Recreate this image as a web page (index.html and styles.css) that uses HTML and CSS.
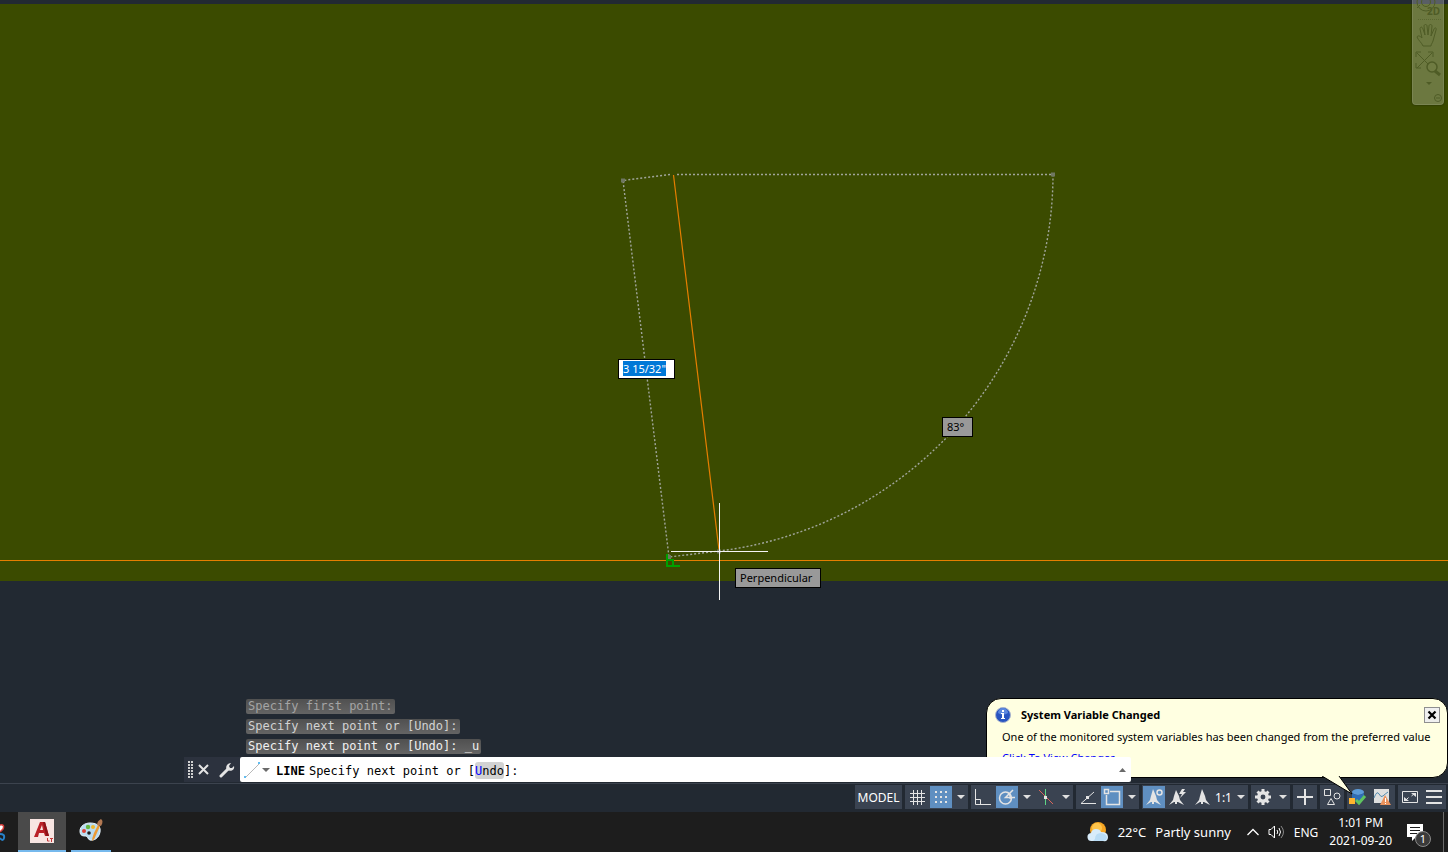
FILE: index.html
```html
<!DOCTYPE html>
<html lang="en">

<head>
	<title>Drawing</title>

	<meta charset="utf-8">
	<meta name="viewport" content="width=device-width, initial-scale=1.0">

	<link rel="stylesheet" href="styles.css">
</head>

<body>

	<main class="workspace">

		<div class="hatch"></div>

		<!-- Drawing area -->
		<svg class="drawing" aria-hidden="true">
			<path class="orange" d="M0 560.5H3000M673.5 175L719 550" />
			<path class="tracking" d="M670 174.500L623 180.500L669 557L719 551M677 174.500H1053A380 380 0 0 1 719 551" />
			<path class="grip" d="M621 178.500h4v4h-4zM1051 172.500h4v4h-4zM667 555h4v4h-4zM717 549.500h4v4h-4z" />
			<path class="snap" d="M667 554V566H680M667 560h6v6" />
			<path class="crosshair" d="M671 551.500H768M719.500 503V600" />
		</svg>

		<input class="distance" aria-label="Distance" value='3 15/32"'>
		<output class="tip tip-angle">83°</output>
		<div class="tip tip-snap">Perpendicular</div>

		<!-- Navigation bar -->
		<nav class="navbar" aria-label="Navigation">
			<svg width="30" height="104" viewBox="0 0 30 104">
				<g fill="none" stroke="#4f5c26">
					<circle cx="13" cy="2" r="9" />
					<circle cx="13" cy="2" r="4.500" />
					<path d="M7 5l-3 3" />
					<path stroke-dasharray="1 1" d="M5 19.500h23" opacity=".6" />
					<path d="M10 46c-1-3-5-6-6-9 1-2 3-1 5 1L7 29c0-2 2-3 3 0l2 6-1-9c0-2 3-2 3 0l1 9 1-9c0-2 3-2 3 0l-1 10 3-7c1-2 3-1 2 1l-3 11c-1 3-2 3-2 5z" />
					<path d="M4 53l15 15M19 53L4 68M3 57v-5h5M15 52h5v5M3 63v5h5" />
					<circle cx="19" cy="67" r="5" stroke-width="1.500" fill="#6f7b42" />
					<path stroke-width="3" d="M22 71l5 4" />
					<circle cx="25" cy="98" r="3.500" />
					<path d="M23 98h4" />
				</g>
				<path fill="#4f5c26" d="M13 82h6l-3 3z" />
				<text class="navbar-text" x="14" y="15">2D</text>
			</svg>
		</nav>

		<!-- Command line -->
		<section class="console">
			<ul class="history">
				<li class="old">Specify first point:</li>
				<li class="mid">Specify next point or [Undo]:</li>
				<li>Specify next point or [Undo]: _u</li>
			</ul>
			<div class="command">
				<div class="command-tools">
					<span class="handle"></span>
					<button class="plain" aria-label="Close"><svg width="11" height="11" viewBox="0 0 11 11"><path d="M1 1l9 9M10 1l-9 9" stroke="#e4e4e4" stroke-width="2" /></svg></button>
					<button class="plain wrench" aria-label="Customize"><svg width="16" height="16" viewBox="0 0 16 16"><path d="M2 14L9 7" stroke="#e4e4e4" stroke-width="3" stroke-linecap="round" /><path d="M8 8C6 5 8 1 12 1l-2 3 1 2 2 0 2-2c1 4-3 6-7 4z" fill="#e4e4e4" /></svg></button>
				</div>
				<div class="prompt">
					<button class="plain recent" aria-label="Recent commands"><svg width="27" height="17" viewBox="0 0 27 17"><path d="M2 15L15 2" stroke="#b8b8b8" /><path fill="#63bdf0" d="M0 14h2v2H0zM14 0h2v2h-2z" /><path fill="#6a6a6a" d="M18 6h8l-4 4z" /></svg></button>
					<b>LINE</b>
					<label for="cmd">Specify next point or [</label><button class="keyword"><i>U</i>ndo</button><span>]:</span>
					<input class="cmd" id="cmd">
					<button class="plain" aria-label="History"><svg width="8" height="5" viewBox="0 0 8 5"><path fill="#6a6a6a" d="M0 4h7L3.500 0z" /></svg></button>
				</div>
			</div>
		</section>

		<!-- Notification balloon -->
		<aside class="balloon">
			<header class="balloon-head">
				<svg width="16" height="16" viewBox="0 0 16 16"><circle cx="8" cy="8" r="7.500" fill="#2854c0" stroke="#a9b4cd" /><path d="M3 6a5 5 0 0 1 10 0q-5 3-10 0z" fill="#5d88de" /><path d="M7 3h2v2H7zM6 6h3v5h1v1H6v-1h1V7H6z" fill="#fff" /></svg>
				<h1>System Variable Changed</h1>
				<button class="balloon-close" aria-label="Close"><svg width="10" height="10" viewBox="0 0 10 10"><path d="M1.500 1.500l7 7M8.500 1.500l-7 7" stroke="#000" stroke-width="2.200" /></svg></button>
			</header>
			<p>One of the monitored system variables has been changed from the preferred value</p>
			<a href="#">Click To View Changes</a>
			<svg class="tail" width="34" height="20" viewBox="0 0 34 20"><path d="M1 0L31 18L18 0" fill="#ffffe1" stroke="#000" /></svg>
		</aside>

	</main>

	<!-- Status bar -->
	<div class="status">
		<div class="group"><button class="model">MODEL</button></div>
		<div class="group">
			<button aria-label="Grid"><svg width="22" height="22" viewBox="0 0 22 22"><path d="M7.500 4v15M11.500 4v15M15.500 4v15M4 7.500h15M4 11.500h15M4 15.500h15" /></svg></button>
			<button class="on" aria-label="Snap"><svg width="22" height="22" viewBox="0 0 22 22"><path class="solid" d="M5 5h2v2H5zM10 5h2v2h-2zM15 5h2v2h-2zM5 10h2v2H5zM10 10h2v2h-2zM15 10h2v2h-2zM5 15h2v2H5zM10 15h2v2h-2zM15 15h2v2h-2z" /></svg></button>
			<button class="arrow" aria-label="Snap settings"></button>
		</div>
		<div class="group">
			<button aria-label="Ortho"><svg width="22" height="22" viewBox="0 0 22 22"><path d="M3.500 3v15.500H19M3.500 13.500h5v5" /></svg></button>
			<button class="on" aria-label="Polar"><svg width="22" height="22" viewBox="0 0 22 22"><circle cx="9.500" cy="12" r="6" stroke-width="1.500" /><path stroke-width="1.500" d="M19 11.500H9.500L17 4M12 7q3 2 2 6" /></svg></button>
			<button class="arrow" aria-label="Polar settings"></button>
			<button aria-label="Isometric"><svg width="22" height="22" viewBox="0 0 22 22"><path stroke="#d8675c" d="M4 4l14 14" /><path stroke="#5fd586" d="M10.500 3v16" /><path class="solid" d="M9 10h3v3H9z" /></svg></button>
			<button class="arrow" aria-label="Isometric settings"></button>
		</div>
		<div class="group">
			<button aria-label="Object tracking"><svg width="22" height="22" viewBox="0 0 22 22"><path d="M19 17.500H4L17 6" /><path class="solid" d="M9 10h3v3H9z" /></svg></button>
			<button class="on" aria-label="Object snap"><svg width="22" height="22" viewBox="0 0 22 22"><path stroke-width="1.500" d="M9 5.500h9.500v13h-13V9M3.500 3.500h4v4h-4z" /></svg></button>
			<button class="arrow" aria-label="Object snap settings"></button>
		</div>
		<div class="group">
			<button class="on" aria-label="Annotation visibility"><svg width="22" height="22" viewBox="0 0 22 22"><path class="solid" d="M10 3l3 7 1 4 4 5-6-3h-1v2H9v-2H8l-5 3 4-5 1-4z" /><circle cx="16.500" cy="6.500" r="2.500" stroke-width="1.500" /></svg></button>
			<button aria-label="Auto scale"><svg width="22" height="22" viewBox="0 0 22 22"><path class="solid" d="M9 4l3 6 1 4 4 5-6-3h-1v2H8v-2H7l-5 3 4-5 1-4zM15 3l-3 5h3l-2 4 6-6h-3l2-3z" /></svg></button>
			<button aria-label="Annotation"><svg width="22" height="22" viewBox="0 0 22 22"><path class="solid" d="M11 3l3 7 1 4 4 5-6-3h-1v2h-2v-2H9l-5 3 4-5 1-4z" /></svg></button>
			<button class="scale">1:1</button>
			<button class="arrow" aria-label="Scale list"></button>
		</div>
		<div class="group">
			<button aria-label="Workspace"><svg width="22" height="22" viewBox="0 0 22 22"><circle cx="11" cy="11" r="4.200" stroke-width="3.500" /><path stroke-width="3" d="M11 3v3M11 16v3M3 11h3M16 11h3M5.500 5.500l2 2M14.500 14.500l2 2M5.500 16.500l2-2M14.500 7.500l2-2" /></svg></button>
			<button class="arrow" aria-label="Workspace list"></button>
		</div>
		<div class="group">
			<button aria-label="Monitor"><svg width="22" height="22" viewBox="0 0 22 22"><path stroke-width="2" d="M11 3v16M3 11h16" /></svg></button>
		</div>
		<div class="group">
			<button aria-label="Isolate"><svg width="22" height="22" viewBox="0 0 22 22"><path d="M3.500 3.500h6v6h-6zM10 12.500l3.500 6h-7z" /><circle cx="16" cy="10" r="3" /></svg></button>
		</div>
		<div class="group">
			<button aria-label="System variables"><svg width="22" height="22" viewBox="0 0 22 22"><ellipse cx="10" cy="6" rx="6" ry="3" fill="#5c9bd8" stroke="none" /><path fill="#2f6db5" stroke="none" d="M4 7q6 4 12 0v6q-6 4-12 0z" /><path fill="#ffb52e" stroke="none" d="M1 12h6v6H1z" /><path stroke="#5fc460" stroke-width="3" d="M8 14l3 3 6-7" /></svg></button>
			<button aria-label="Performance"><svg width="22" height="22" viewBox="0 0 22 22"><path fill="#dedede" stroke="none" d="M2 3h15v14H2z" /><path stroke="#5089ae" d="M2 12q3-8 5-4t4 2 5-4" /><path fill="#e9915c" stroke="none" d="M13 9l6 10H8z" /><path stroke="#fff" d="M13.500 12v4M13.500 17v1" /></svg></button>
		</div>
		<div class="group">
			<button aria-label="Clean screen"><svg width="22" height="22" viewBox="0 0 22 22"><path d="M3.500 5.500h15v11h-15z" /><path class="solid" d="M12 7h5v4zM5 11v4h5z" /><path d="M12.500 10l3-2.500M6.500 14.500l3-3" /></svg></button>
			<button aria-label="Customization"><svg width="22" height="22" viewBox="0 0 22 22"><path stroke-width="2" d="M3 5h16M3 11h16M3 17h16" /></svg></button>
		</div>
	</div>

	<!-- Taskbar -->
	<footer class="taskbar">
		<svg class="snip" width="6" height="24" viewBox="0 0 6 24"><path d="M0 5q5-1 3 4L0 12" fill="#fff" stroke="#d43d39" stroke-width="1.500" /><path d="M0 14q5 0 4 4t-4 0" fill="none" stroke="#2780c8" stroke-width="2" /></svg>
		<button class="task task-active" aria-label="AutoCAD LT">
			<svg width="24" height="24" viewBox="0 0 24 24"><path fill="#f8e5e2" d="M0 0h24v24H0z" /><path fill="#ba2027" d="M4 18L10 3h5l4 14h-4l-1-3H9l-1 4zM10 11h3l-1-5z" /><path fill="#8d1218" d="M13 3h2l4 14h-3z" /><path stroke="#c5383a" fill="none" d="M17.500 19v3h2M20 19.500h3M21.500 19v4" /></svg>
		</button>
		<button class="task" aria-label="Paint">
			<svg width="26" height="24" viewBox="0 0 26 24"><path fill="#b9dcf0" stroke="#e9f5fc" d="M12 4c8 0 11 4 10 9-1 6-6 9-10 8-3-1-1-3-4-4-3 0-6 0-6-5 0-5 5-8 10-8z" /><circle cx="6" cy="12" r="2" fill="#dd4136" /><circle cx="10" cy="8" r="2.200" fill="#65b741" /><circle cx="15" cy="8" r="2" fill="#efb82d" /><circle cx="11" cy="14" r="1.800" fill="#1d1d1d" /><path d="M14 22q0-3 2-8l4-8 2 1-4 9q-1 4-4 6z" fill="#ec9a33" /><path d="M19 6q0-4 4-6 3 2 0 7z" fill="#b27852" /></svg>
		</button>

		<div class="tray">
			<svg width="22" height="22" viewBox="0 0 22 22"><circle cx="11" cy="9" r="8" fill="#f6a623" /><circle cx="10" cy="7" r="5" fill="#ffc54b" /><path d="M5 20a4 4 0 0 1-1-8q1-4 5-4t5 3q7 0 7 5t-5 4z" fill="#d8ecfa" /><path d="M8 18q0-6 6-6 6 1 6 5-1 3-5 3H6z" fill="#b9dcf5" /></svg>
			<span class="temp">22°C</span>
			<span class="sky">Partly sunny</span>
			<button class="plain" aria-label="Hidden icons"><svg width="12" height="8" viewBox="0 0 12 8"><path d="M0.500 7L6 1.500 11.500 7" fill="none" stroke="#fff" stroke-width="1.300" /></svg></button>
			<button class="plain volume" aria-label="Volume"><svg width="17" height="14" viewBox="0 0 17 14"><path d="M1 4.500h2L6.500 1v12L3 9.500H1zM9 5q1.500 2 0 4M11 3q3 4 0 8" fill="none" stroke="#fff" /><path d="M13 1q5 6 0 12" fill="none" stroke="#888" /></svg></button>
			<span class="lang">ENG</span>
			<time class="clock" datetime="2021-09-20T13:01">1:01 PM<br>2021-09-20</time>
			<button class="plain notes" aria-label="Notifications">
				<svg width="17" height="17" viewBox="0 0 17 17"><path fill="#fff" d="M0 0h16v13H9l-4 4v-4H0z" /><path stroke="#1d1d1d" d="M3 3.500h10M3 6.500h10M3 9.500h7" /></svg>
				<span class="badge">1</span>
			</button>
		</div>
	</footer>

	<script>
		// keep the distance value selected, ready to be typed over
		var distance = document.querySelector('.distance');
		distance.focus();
		distance.select();
	</script>

</body>

</html>
```
FILE: styles.css
```css
*,
*:before,
*:after {
	box-sizing: border-box;
}

/**
 * Layout
 */
body {
	background-color: #ffffff;
	display: flex;
	flex-direction: column;
	font-family: "Noto Sans", "Open Sans", sans-serif;
	font-size: 12px;
	margin: 0;
	min-height: 100vh;
	overflow: hidden;
	padding: 0 7px 4px 0;
}

button,
input {
	font: inherit;
}

button {
	background-color: transparent;
	border: 0;
	color: inherit;
	padding: 0;
}

svg {
	display: block;
	flex: none;
}

.plain {
	display: flex;
}

.workspace {
	background-color: #222932;
	display: flex;
	flex: 1;
	flex-direction: column;
	padding-top: 4px;
	position: relative;
}

.hatch {
	background-color: #3b4b00;
	flex: 1;
}

/**
 * Drawing
 */
.drawing {
	height: 100%;
	left: 0;
	position: absolute;
	top: 0;
	width: 100%;
}

.drawing path {
	fill: none;
}

.drawing .orange {
	stroke: #e57e00;
	stroke-width: 1.2px;
}

.drawing .tracking {
	stroke: #a0a59a;
	stroke-dasharray: 2 2;
	stroke-width: 1.4px;
}

.drawing .grip {
	fill: #6f7761;
}

.drawing .snap {
	stroke: #00a000;
	stroke-width: 2px;
}

.drawing .crosshair {
	stroke: #f4f4f4;
}

.distance,
.tip {
	border: 1px solid #000000;
	font-size: 11px;
	height: 20px;
	line-height: 18px;
	padding: 0 4px;
	position: absolute;
}

.distance {
	background-color: #ffffff;
	left: 618px;
	outline: 0;
	padding-bottom: 2px;
	top: 359px;
	width: 57px;
}

.distance::selection {
	background-color: #0078d7;
	color: #ffffff;
}

.tip {
	background-color: #999999;
	color: #000000;
	padding-right: 8px;
}

.tip-angle {
	left: 942px;
	top: 417px;
}

.tip-snap {
	left: 735px;
	top: 568px;
}

/**
 * Navigation bar
 */
.navbar {
	background-color: rgba(255, 255, 255, 0.25);
	border: 1px solid rgba(255, 255, 255, 0.1);
	border-radius: 0 0 4px 4px;
	border-top: 0;
	box-shadow: 0 0 2px #1d2500;
	position: absolute;
	right: 4px;
	top: 0;
}

.navbar-text {
	fill: #4f5c26;
	font-size: 10px;
	font-weight: bold;
}

/**
 * Command line
 */
.console {
	display: flex;
	flex-direction: column;
	height: 202px;
	justify-content: flex-end;
	padding: 0 317px 1px 184px;
	position: relative;
	z-index: 2;
}

.history,
.prompt {
	font-family: "DejaVu Sans Mono", "Liberation Mono", monospace;
	font-size: 12px;
}

.history {
	align-items: flex-start;
	color: #f0f0f0;
	display: flex;
	flex-direction: column;
	gap: 5px;
	line-height: 15px;
	list-style: none;
	margin: 0 0 3px;
	padding: 0 0 0 62px;
}

.history li {
	background-image: linear-gradient(#505050, #646464);
	border-radius: 2px;
	padding: 0 2px;
}

.history .mid {
	color: #d2d2d2;
}

.history .old {
	color: #a4a4a4;
}

.command {
	display: flex;
	height: 25px;
}

.command-tools {
	align-items: center;
	background-color: #2c323e;
	display: flex;
	gap: 4px;
	padding-left: 4px;
	width: 56px;
}

.handle {
	background-image: radial-gradient(circle at 1px 1px, #d0d0d0 1px, transparent 1px);
	background-size: 3px 3px;
	height: 18px;
	width: 6px;
}

.wrench {
	margin-left: 6px;
}

.prompt {
	align-items: center;
	background-color: #ffffff;
	border-radius: 2px;
	color: #000000;
	display: flex;
	flex: 1;
	padding: 2px 4px 0;
}

.recent {
	margin-right: 5px;
}

.prompt label {
	margin-left: 4px;
}

.keyword {
	background-color: #d2d2d2;
	border-radius: 3px;
	height: 17px;
}

.keyword i {
	color: #0000ff;
	font-style: normal;
}

.cmd {
	background-color: transparent;
	border: 0;
	flex: 1;
	min-width: 0;
	outline: 0;
}

/**
 * Balloon
 */
.balloon {
	background-color: #ffffe1;
	border: 1px solid #000000;
	border-radius: 15px;
	bottom: 5px;
	color: #000000;
	font-size: 11px;
	height: 80px;
	padding: 8px 7px 0 8px;
	position: absolute;
	right: 0;
	width: 462px;
	z-index: 1;
}

.balloon-head {
	align-items: center;
	display: flex;
}

.balloon h1 {
	flex: 1;
	font-size: 11px;
	line-height: 16px;
	margin: 0 0 0 10px;
}

.balloon-close {
	align-items: center;
	background-color: #f0f0f0;
	border: 1px solid #8f8f8f;
	display: flex;
	height: 16px;
	justify-content: center;
	width: 16px;
}

.balloon p {
	line-height: 16px;
	margin: 6px 0 5px 7px;
	white-space: nowrap;
}

.balloon a {
	color: #0000ff;
	line-height: 16px;
	margin-left: 7px;
}

.tail {
	position: absolute;
	right: 92px;
	top: 77px;
}

/**
 * Status bar
 */
.status {
	background-color: #222932;
	border-top: 1px solid #3c434e;
	color: #ffffff;
	display: flex;
	gap: 3px;
	height: 29px;
	justify-content: flex-end;
	padding: 1px 2px 3px 0;
}

.group {
	align-items: center;
	background-color: #3a4351;
	display: flex;
	padding: 0 1px;
}

.group button {
	height: 22px;
	margin-right: 2px;
	width: 22px;
}

.group button:last-child {
	margin-right: 0;
}

.group svg {
	fill: none;
	stroke: #e4e4e4;
}

.group .solid {
	fill: #e4e4e4;
	stroke: none;
}

.group .on {
	background-color: #5f8fc1;
}

.group .model {
	width: 45px;
}

.group .scale {
	width: 17px;
}

.group .arrow {
	align-items: center;
	display: flex;
	justify-content: center;
	width: 13px;
}

.arrow:before {
	border: 4px solid transparent;
	border-bottom: 0;
	border-top-color: #e0e0e0;
	content: "";
}

/**
 * Taskbar
 */
.taskbar {
	background-color: #1d1d1d;
	color: #ffffff;
	display: flex;
	height: 40px;
}

.snip {
	align-self: center;
	margin-right: 12px;
}

.task {
	align-items: center;
	border-bottom: 2px solid #76b9ed;
	display: flex;
	justify-content: center;
	margin-right: 5px;
	width: 40px;
}

.task-active {
	background-color: #4a4a4a;
	width: 48px;
}

.tray {
	align-items: center;
	border-right: 1px solid #6a6a6a;
	display: flex;
	flex: 1;
	justify-content: flex-end;
	margin-right: 4px;
	padding-right: 12px;
}

.temp,
.sky {
	font-size: 13px;
	margin-left: 9px;
}

.sky {
	margin-right: 16px;
}

.volume {
	margin-left: 9px;
}

.lang {
	margin-left: 9px;
}

.clock {
	line-height: 18px;
	margin-left: 11px;
	text-align: center;
}

.notes {
	margin-left: 15px;
	padding-right: 7px;
	position: relative;
}

.badge {
	background-color: #3a3a3a;
	border: 1px solid #8a8a8a;
	border-radius: 50%;
	font-size: 11px;
	height: 16px;
	left: 8px;
	line-height: 14px;
	position: absolute;
	top: 7px;
	width: 16px;
}
```
